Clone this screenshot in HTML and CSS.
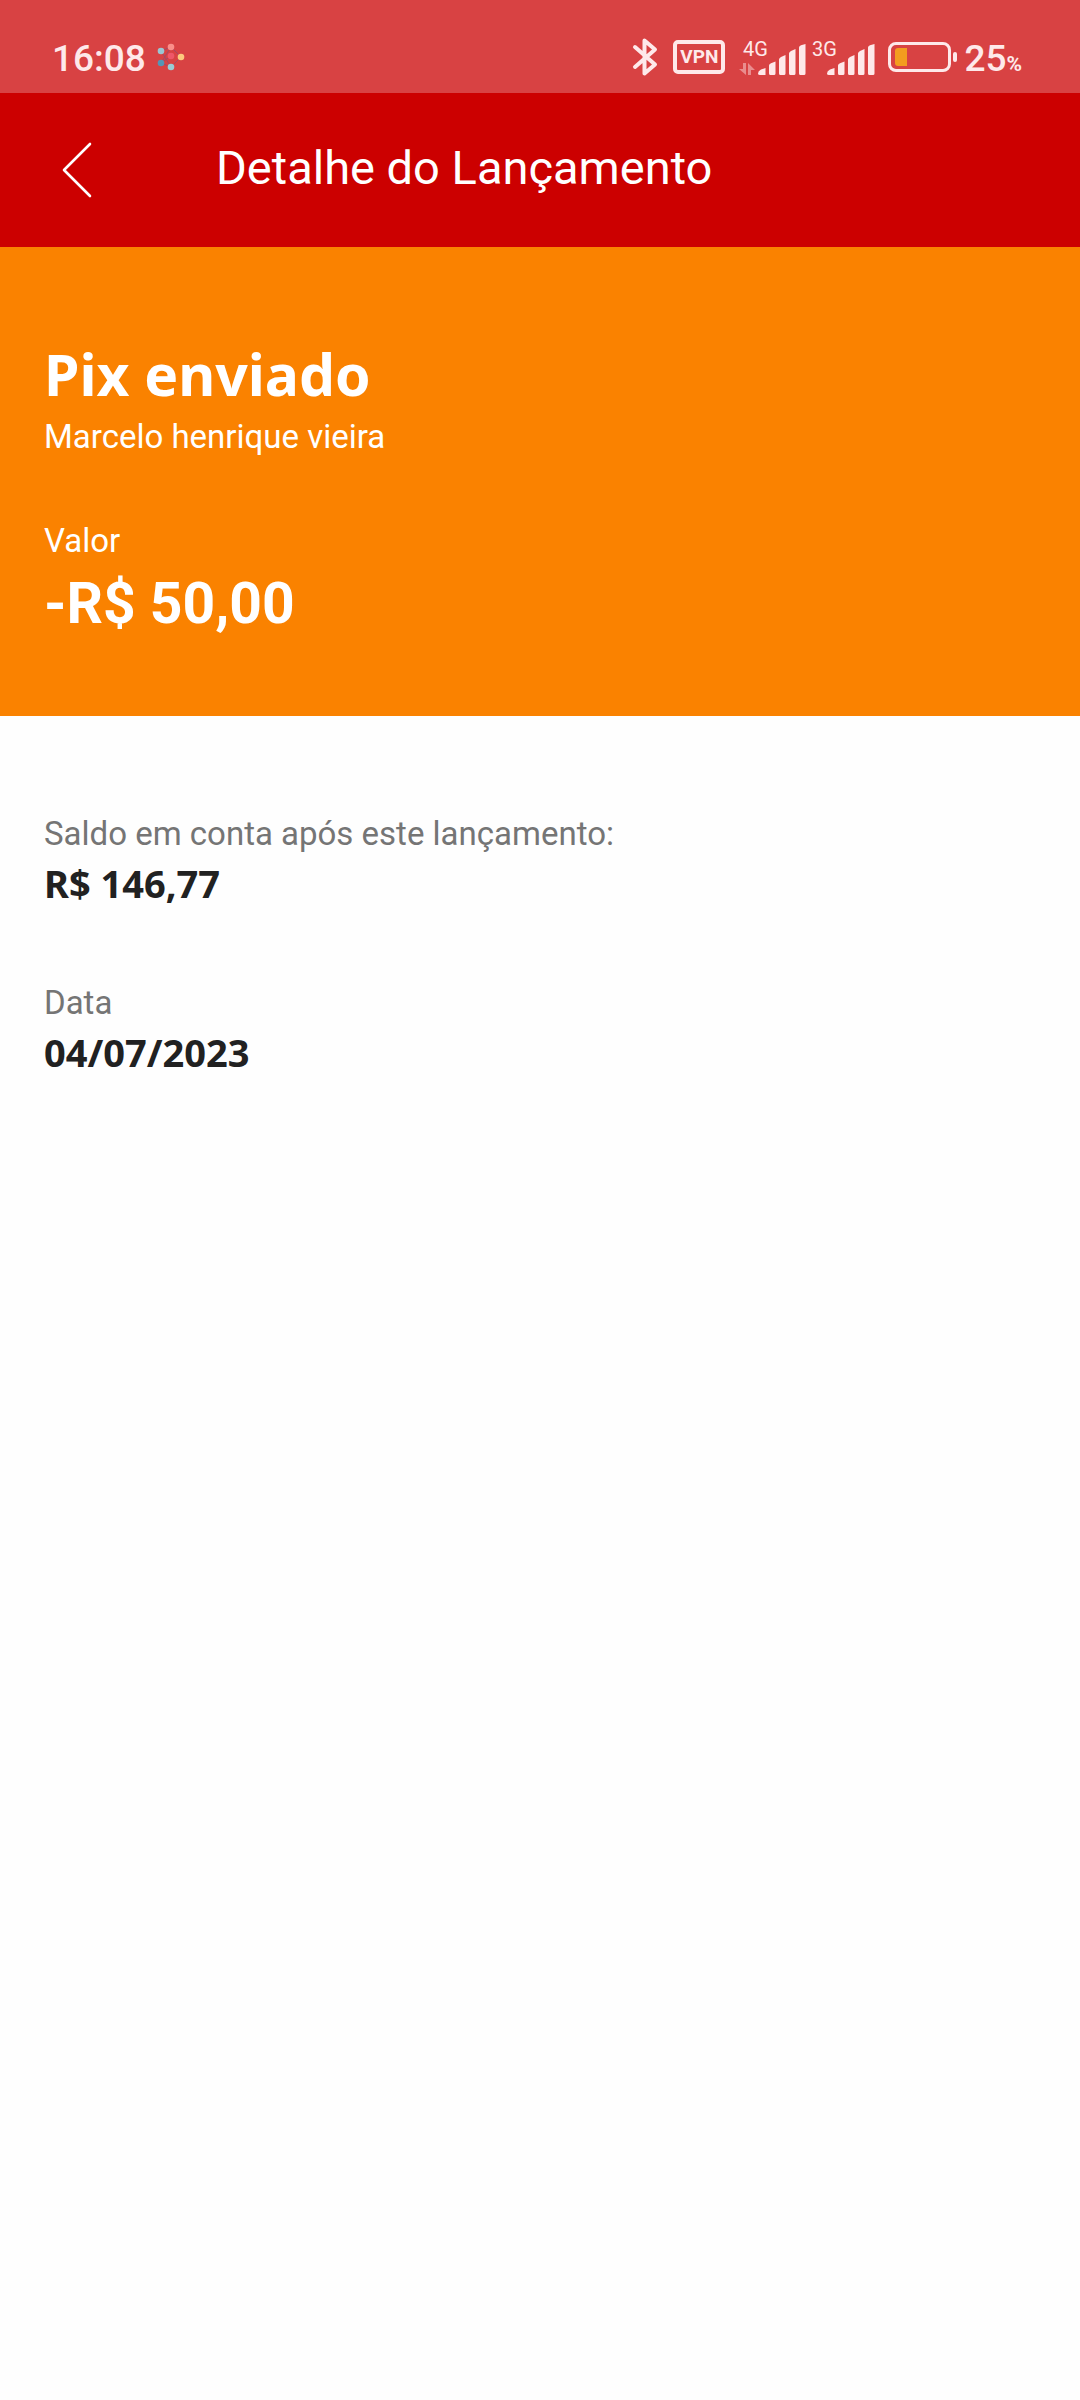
FILE: index.html
```html
<!DOCTYPE html>
<html lang="pt-BR">
<head>
<meta charset="utf-8">
<meta name="viewport" content="width=device-width, initial-scale=1">
<title>Detalhe do Lançamento</title>
<link rel="stylesheet" href="styles.css">
</head>
<body>
<div class="status">
  <div class="status-left">
    <span class="status-text">16:08</span>
    <svg class="app-dots" width="28" height="28" viewBox="0 0 28 28" aria-hidden="true">
      <path d="M4 8 14 4 24 14 14 24 4 20 14 4M4 8 14 24M4 20 14 13" fill="none" stroke="#a04a66" stroke-width="1"/>
      <circle cx="4" cy="8" r="3.3" fill="#9ac6d2"/>
      <circle cx="14" cy="4" r="3.3" fill="#fa8f89"/>
      <circle cx="14" cy="13" r="3.3" fill="#ee5768"/>
      <circle cx="24" cy="14" r="3.3" fill="#fdc97e"/>
      <circle cx="4" cy="20" r="3.3" fill="#5595b6"/>
      <circle cx="14" cy="24" r="3.3" fill="#9accd6"/>
    </svg>
  </div>
  <div class="status-right">
    <svg width="26" height="40" viewBox="0 0 26 40" aria-label="Bluetooth" role="img">
      <path d="M3 10 23 27.500 12.500 36.500V3.500L23 12.500 3 30" fill="none" stroke="currentColor" stroke-width="4" stroke-linecap="round" stroke-linejoin="round"/>
    </svg>
    <span class="vpn">VPN</span>
    <svg class="signal-data" width="68" height="42" viewBox="0 -4 68 42" aria-label="Sinal 4G" role="img">
      <g fill="currentColor">
        <path opacity=".45" d="M4 23h3v12L0 29h4zM9 35V23l7 7h-4v5z"/>
        <text class="net" x="4" y="16">4G</text>
        <path d="M19 33.500Q19 31 22 29.500L26.500 28V35H21Q19 35 19 33.500zM30 25.500Q30 24 32 23.200L36.500 21.500V33.500Q36.500 35 35 35H31.500Q30 35 30 33.500zM40 19.500Q40 18 42 17L46.500 15V33.500Q46.500 35 45 35H41.500Q40 35 40 33.500zM50 13.500Q50 12 52 11L56.500 9V33.500Q56.500 35 55 35H51.500Q50 35 50 33.500zM60 7.500Q60 6 62 5.200L66.500 4V33.500Q66.500 35 65 35H61.500Q60 35 60 33.500z"/>
      </g>
    </svg>
    <svg class="signal" width="64" height="42" viewBox="4 -4 64 42" aria-label="Sinal 3G" role="img">
      <g fill="currentColor">
        <text class="net" x="4" y="16">3G</text>
        <path d="M19 33.500Q19 31 22 29.500L26.500 28V35H21Q19 35 19 33.500zM30 25.500Q30 24 32 23.200L36.500 21.500V33.500Q36.500 35 35 35H31.500Q30 35 30 33.500zM40 19.500Q40 18 42 17L46.500 15V33.500Q46.500 35 45 35H41.500Q40 35 40 33.500zM50 13.500Q50 12 52 11L56.500 9V33.500Q56.500 35 55 35H51.500Q50 35 50 33.500zM60 7.500Q60 6 62 5.200L66.500 4V33.500Q66.500 35 65 35H61.500Q60 35 60 33.500z"/>
      </g>
    </svg>
    <svg class="battery" width="70" height="30" viewBox="0 0 70 30" aria-label="Bateria" role="img">
      <rect x="1.500" y="1.500" width="60" height="27" rx="6.500" fill="none" stroke="currentColor" stroke-width="3"/>
      <path d="M19 6V24H10Q7 24 7 21V9Q7 6 10 6z" fill="#f39c1f"/>
      <rect x="65" y="10" width="4" height="10" rx="2" fill="currentColor"/>
    </svg>
    <span class="status-text">25<small class="percent">%</small></span>
  </div>
</div>
<header class="header">
  <button class="back" type="button" aria-label="Voltar">
    <svg width="30" height="58" viewBox="0 0 30 58" aria-hidden="true">
      <path d="M28 3 2 29 28 55" fill="none" stroke="#fff" stroke-width="2.600" stroke-linecap="round" stroke-linejoin="round"/>
    </svg>
  </button>
  <h1 class="title">Detalhe do Lançamento</h1>
</header>
<main>
  <section class="hero">
    <div class="group">
      <h2 class="kind">Pix enviado</h2>
      <p class="label">Marcelo henrique vieira</p>
    </div>
    <div class="group">
      <p class="label">Valor</p>
      <p class="amount">-R$ 50,00</p>
    </div>
  </section>
  <dl class="details">
    <div class="item">
      <dt class="label">Saldo em conta após este lançamento:</dt>
      <dd class="value">R$ 146,77</dd>
    </div>
    <div class="item">
      <dt class="label">Data</dt>
      <dd class="value">04/07/2023</dd>
    </div>
  </dl>
</main>
</body>
</html>
```
FILE: styles.css
```css
* {
  box-sizing: border-box;
}

body,
h1,
h2,
p,
dl,
dd {
  margin: 0;
}

body {
  min-height: 100vh;
  background: #fefefe;
  font-family: Roboto, "Noto Sans", sans-serif;
}

.status {
  display: flex;
  justify-content: space-between;
  align-items: center;
  padding: 36px 58px 15px 52px;
  background: #d84243;
  color: #fee9ea;
}

.status-left,
.status-right {
  display: flex;
  align-items: center;
}

.status-left {
  gap: 11px;
}

.status-text {
  font-size: 37px;
  line-height: 38px;
  font-weight: 500;
  padding-top: 4px;
}

.percent {
  font-size: 21px;
  line-height: 20px;
  font-weight: 700;
}

.vpn {
  margin-left: 15px;
  padding: 0 3px;
  border: 4px solid currentColor;
  border-radius: 5px;
  font-size: 19px;
  line-height: 26px;
  font-weight: 700;
}

.signal-data {
  margin-left: 14px;
}

.signal {
  margin-left: 5px;
}

.net {
  font-size: 20px;
}

.battery {
  margin: 0 6px 0 12px;
}

.header {
  display: flex;
  align-items: center;
  height: 154px;
  padding: 0 44px;
  background: #c00;
  color: #fff;
}

.back {
  display: flex;
  width: 172px;
  padding: 0 18px;
  border: 0;
  background: none;
}

.title {
  padding-bottom: 4px;
  font-size: 47px;
  line-height: 56px;
  font-weight: 400;
}

.hero {
  display: grid;
  gap: 60px;
  padding: 95px 44px 80px;
  background: #fa8200;
  color: #fff;
}

.group {
  display: grid;
  gap: 9px;
}

.kind {
  font-family: "Noto Sans", sans-serif;
  font-size: 57px;
  line-height: 64px;
  font-weight: 700;
}

.label {
  font-size: 33px;
  line-height: 44px;
}

.amount {
  font-size: 57px;
  line-height: 64px;
  font-weight: 700;
}

.details {
  display: grid;
  gap: 76px;
  padding: 96px 44px;
}

.item {
  display: grid;
  gap: 5px;
  color: #757575;
}

.value {
  color: #212121;
  font-family: "Noto Sans", sans-serif;
  font-size: 38px;
  line-height: 44px;
  font-weight: 700;
}
```
